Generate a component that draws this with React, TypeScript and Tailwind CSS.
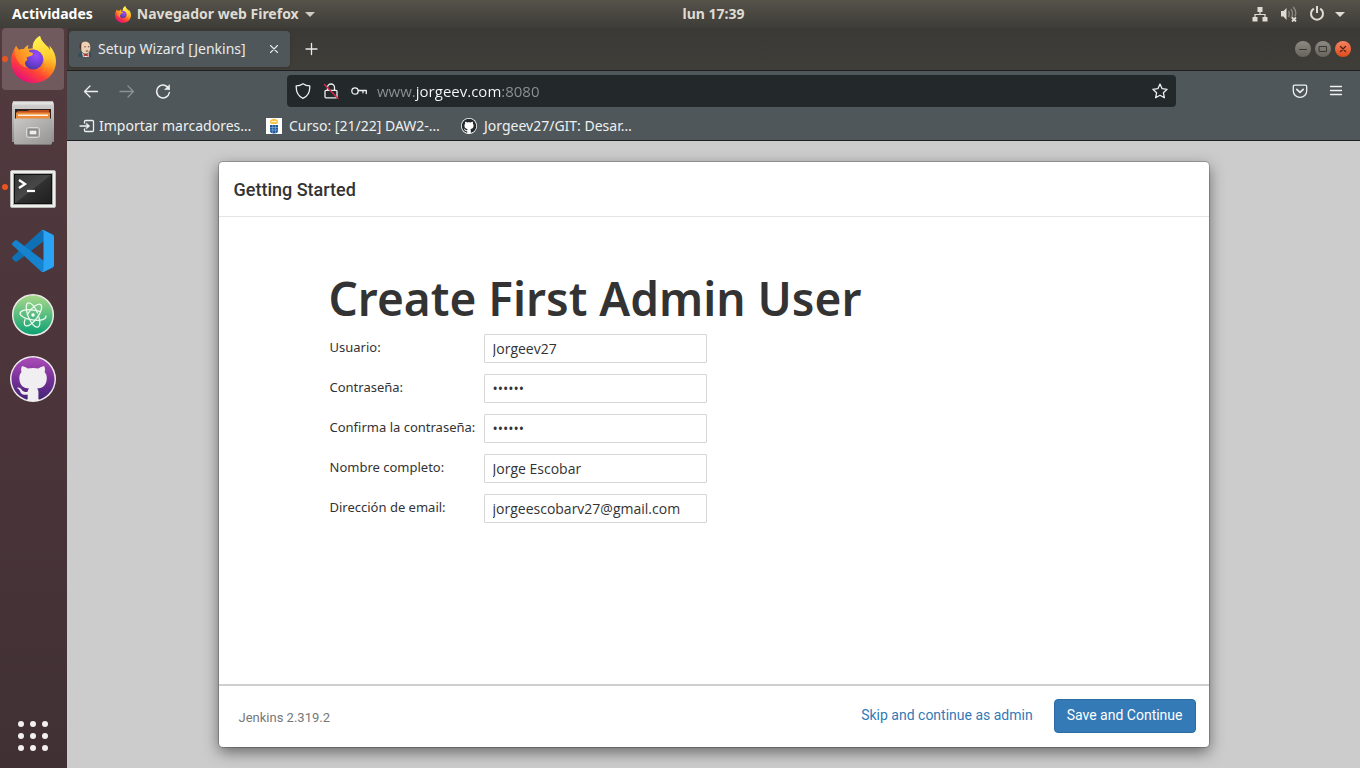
import type { ReactNode } from "react";

const MARK =
  "M8 0C3.58 0 0 3.58 0 8c0 3.54 2.29 6.53 5.47 7.59.4.07.55-.17.55-.38 0-.19-.01-.82-.01-1.49-2.01.37-2.53-.49-2.69-.94-.09-.23-.48-.94-.82-1.13-.28-.15-.68-.52-.01-.53.63-.01 1.08.58 1.23.82.72 1.21 1.87.87 2.33.66.07-.52.28-.87.51-1.07-1.78-.2-3.64-.89-3.64-3.95 0-.87.31-1.59.82-2.15-.08-.2-.36-1.02.08-2.12 0 0 .67-.21 2.2.82.64-.18 1.32-.27 2-.27s1.36.09 2 .27c1.53-1.04 2.2-.82 2.2-.82.44 1.1.16 1.92.08 2.12.51.56.82 1.27.82 2.15 0 3.07-1.87 3.75-3.65 3.95.29.25.54.73.54 1.48 0 1.07-.01 1.93-.01 2.2 0 .21.15.46.55.38A8.01 8.01 0 0 0 16 8c0-4.42-3.58-8-8-8z";

function FirefoxIcon({ id, className }: { id: string; className: string }) {
  return (
    <svg viewBox="0 0 45 47" className={className} aria-hidden="true">
      <defs>
        <linearGradient id={`${id}-body`} x1="0.8" y1="0.05" x2="0.25" y2="0.95">
          <stop offset="0" stopColor="#fff44f" />
          <stop offset="0.3" stopColor="#ffc42d" />
          <stop offset="0.5" stopColor="#ff8a1e" />
          <stop offset="0.72" stopColor="#ff4038" />
          <stop offset="1" stopColor="#e5107c" />
        </linearGradient>
        <radialGradient id={`${id}-globe`} cx="0.65" cy="0.3" r="0.8">
          <stop offset="0" stopColor="#9a4dff" />
          <stop offset="0.5" stopColor="#7340d8" />
          <stop offset="1" stopColor="#45369c" />
        </radialGradient>
        <linearGradient id={`${id}-head`} x1="0.9" y1="0.2" x2="0.1" y2="0.9">
          <stop offset="0" stopColor="#ffb62a" />
          <stop offset="0.5" stopColor="#ff9422" />
          <stop offset="1" stopColor="#ff6a2b" />
        </linearGradient>
        <linearGradient id={`${id}-flame`} x1="0.4" y1="0" x2="0.6" y2="1">
          <stop offset="0" stopColor="#fff44f" />
          <stop offset="0.55" stopColor="#ffd234" />
          <stop offset="1" stopColor="#ff9a22" stopOpacity="0" />
        </linearGradient>
      </defs>
      <path
        d="M29 0C30 5 34 8 37.500 11.500C38.300 12.500 38.800 13.500 39 14.500C39.200 12.500 38.700 11 38 9.300C42.500 13.500 45 19.500 45 25.500C45 37.500 35 47 22.500 47C10 47 0 37.500 0 25C0 20 2 15 5 10L8 14C11 12 18 13.500 22 12C21 8 24 2.500 29 0Z"
        fill={`url(#${id}-body)`}
      />
      <path
        d="M29 0C30 5 34 8 37.500 12C41 18 42 26 38 32C36 35 33 37 31 37C35 30 34 22 30 17C28 14.500 24 14 22 13C21 8 24 2.500 29 0Z"
        fill={`url(#${id}-flame)`}
      />
      <circle cx="22.300" cy="23.500" r="10" fill={`url(#${id}-globe)`} />
      <path
        d="M5 10C6 12 7 13.500 8 14C10 13.200 12 13 13 13C14 11 16 9.500 17.500 9C16.300 12 17 15 19 16.200C22 16.500 22.500 17.500 21.500 19C20.500 20.200 16 20.600 15.500 22C16.500 23 17 24 15 25C13 26.500 14 30 17 32C10 31 4 24 4 17C4 14 4.300 12 5 10Z"
        fill={`url(#${id}-head)`}
      />
    </svg>
  );
}

function FilesIcon() {
  return (
    <svg viewBox="0 0 44 46" className="h-[46px] w-11" aria-hidden="true">
      <defs>
        <linearGradient id="cab" x1="0" y1="0" x2="0" y2="1">
          <stop offset="0" stopColor="#d5d4d3" />
          <stop offset="1" stopColor="#8c8b8a" />
        </linearGradient>
        <linearGradient id="drawer" x1="0" y1="0" x2="1" y2="1">
          <stop offset="0" stopColor="#c9c8c7" />
          <stop offset="1" stopColor="#949392" />
        </linearGradient>
      </defs>
      <path d="M2 1.500h40l1 3.500v37H1V5z" fill="url(#cab)" />
      <path d="M2 1.500h40l.5 3h-41z" fill="#e3e2e1" />
      <path d="M4 9h36v11H4z" fill="#2c2321" />
      <path d="M6 13V12q0-1 1-1h10l1-1h20v6H6z" fill="#c04f1c" />
      <path d="M5 12.500h34V19H5z" fill="#ee8a3a" />
      <path d="M7 14.500h30V16H7z" fill="#fff3e0" />
      <path d="M3 19.500q0-1 1-1h36q1 0 1 1V43q0 1.500-1.500 1.500h-35Q3 44.500 3 43z" fill="url(#drawer)" />
      <path d="M4 44.500h36" stroke="#777" strokeWidth="1" />
      <rect x="15.500" y="27.500" width="13" height="10" rx="2" fill="#a9a8a7" stroke="#d8d8d8" />
      <rect x="18" y="30" width="8" height="5" fill="#ededed" stroke="#6b6b6b" />
    </svg>
  );
}

function TerminalIcon() {
  return (
    <svg viewBox="0 0 46 38" className="mt-1 h-[38px] w-[46px]" aria-hidden="true">
      <defs>
        <linearGradient id="screen" x1="0" y1="0" x2="1" y2="1">
          <stop offset="0" stopColor="#343434" />
          <stop offset="0.48" stopColor="#484848" />
          <stop offset="0.52" stopColor="#303030" />
          <stop offset="1" stopColor="#1e1e1e" />
        </linearGradient>
      </defs>
      <rect x="0.500" y="0.500" width="45" height="37" rx="1.500" fill="#efefee" stroke="#b8b8b6" />
      <rect x="3" y="3" width="40" height="32" fill="#a9aaa7" />
      <rect x="4.500" y="4.500" width="37" height="29" fill="url(#screen)" stroke="#111" />
      <path d="M9 10l6 4-6 4" fill="none" stroke="#fff" strokeWidth="2.300" />
      <path d="M17 21h8" stroke="#fff" strokeWidth="2.200" />
    </svg>
  );
}

function CodeIcon() {
  return (
    <svg viewBox="0 0 100 100" className="size-[42px]" aria-hidden="true">
      <path
        fill="#0f70b3"
        d="M96.461 10.796L75.857.876C73.472-.273 70.622.212 68.750 2.083L1.299 63.583c-1.815 1.654-1.813 4.511.004 6.162l5.510 5.009c1.485 1.350 3.722 1.450 5.321.237L93.361 13.370C96.086 11.303 100 13.246 100 16.667v-.24c0-2.400-1.375-4.589-3.539-5.631z"
      />
      <path
        fill="#1583cd"
        d="M96.461 89.204l-20.604 9.920c-2.385 1.149-5.235.664-7.107-1.207L1.299 36.417c-1.815-1.654-1.813-4.511.004-6.162l5.510-5.009c1.485-1.350 3.722-1.450 5.321-.237L93.361 86.630C96.086 88.697 100 86.754 100 83.333v.24c0 2.400-1.375 4.589-3.539 5.631z"
      />
      <path
        fill="#2aa3f4"
        d="M75.858 99.126c-2.386 1.148-5.236.663-7.108-1.209C71.056 100.223 75 98.590 75 95.328V4.672C75 1.410 71.056-.223 68.750 2.083 70.622.211 73.472-.274 75.858.874l20.601 9.907C98.623 11.822 100 14.011 100 16.413v67.174c0 2.402-1.377 4.592-3.541 5.633l-20.601 9.906z"
      />
    </svg>
  );
}

function AtomIcon() {
  return (
    <svg viewBox="0 0 44 44" className="size-11" aria-hidden="true">
      <defs>
        <linearGradient id="atom" x1="0" y1="0" x2="0" y2="1">
          <stop offset="0" stopColor="#a9d98a" />
          <stop offset="1" stopColor="#09a174" />
        </linearGradient>
      </defs>
      <circle cx="22" cy="22" r="20.300" fill="url(#atom)" stroke="#ece9e6" strokeWidth="1.500" />
      <g fill="none" stroke="#eefaf0" strokeWidth="1.300" strokeLinecap="round">
        <ellipse cx="22" cy="22" rx="13" ry="5" transform="rotate(8 22 22)" strokeDasharray="50 8" />
        <ellipse cx="22" cy="22" rx="13" ry="5" transform="rotate(68 22 22)" strokeDasharray="44 4 30" />
        <ellipse cx="22" cy="22" rx="13" ry="5" transform="rotate(-54 22 22)" strokeDasharray="36 5 40" />
      </g>
      <circle cx="22" cy="22" r="1.700" fill="#fff" />
    </svg>
  );
}

function GithubDesktopIcon() {
  return (
    <svg viewBox="0 0 46 46" className="size-[46px]" aria-hidden="true">
      <defs>
        <linearGradient id="gh" x1="0" y1="0" x2="0" y2="1">
          <stop offset="0" stopColor="#a94cb8" />
          <stop offset="0.5" stopColor="#7a3199" />
          <stop offset="1" stopColor="#432676" />
        </linearGradient>
      </defs>
      <circle cx="23" cy="23" r="23" fill="#f1eef2" />
      <path d={MARK} transform="translate(1.500 1.500) scale(2.690)" fill="url(#gh)" />
    </svg>
  );
}

function GithubMark() {
  return (
    <svg viewBox="0 0 16 16" className="size-4 shrink-0" aria-hidden="true">
      <circle cx="8" cy="8" r="8" fill="#fff" />
      <path d={MARK} transform="translate(0.800 0.800) scale(0.900)" fill="#24292e" />
    </svg>
  );
}

function JenkinsIcon() {
  return (
    <svg viewBox="0 0 16 16" className="size-4 shrink-0" aria-hidden="true">
      <path d="M1 16c0-3 1-4.500 4-5.500h7c2 1 2.500 3 2.500 5.500z" fill="#335061" />
      <path d="M5 11l4 4 3-4v5H6z" fill="#f2f0ea" />
      <path d="M3 5C3 2 5.500.3 8.500.3S13.700 2.500 13.700 6.500c0 4-2 6.500-5.200 6.500S3.500 10 3 5z" fill="#efd2b6" stroke="#3b302b" strokeWidth="0.600" />
      <path d="M3.600 8.500C2 6 2.500 2.500 5 1.200 4 3 4.300 6 4.300 9.500z" fill="#49362f" />
      <path d="M7.300 5.800h1.500M10.900 5.800h1.500M8.700 10h2.600" stroke="#49362f" strokeWidth="0.900" />
      <path d="M6.500 13l2.500 1 2.500-1v2.700L9 14.800l-2.500.9z" fill="#d33833" />
    </svg>
  );
}

function CrestIcon() {
  return (
    <svg viewBox="0 0 16 16" className="size-4 shrink-0" aria-hidden="true">
      <path d="M0 0h16v16H0z" fill="#fff" />
      <path d="M4 2.500Q6 .5 8 .8q2-.3 4 1.700L11.500 6h-7z" fill="#f6c545" />
      <path d="M5.500 3.500h5" stroke="#fff" strokeWidth="0.800" />
      <path d="M4 7h8v6q0 2-4 2.500Q4 15 4 13z" fill="#1a5a9c" />
      <path d="M4 9.500h8M4 12h8M6.700 7v8M9.400 7v8" stroke="#a9c7e2" strokeWidth="0.500" />
    </svg>
  );
}

function Line({ width = 1.3, children }: { width?: number; children: ReactNode }) {
  return (
    <svg
      viewBox="0 0 16 16"
      className="size-4 shrink-0"
      fill="none"
      stroke="currentColor"
      strokeWidth={width}
      strokeLinecap="round"
      strokeLinejoin="round"
      aria-hidden="true"
    >
      {children}
    </svg>
  );
}

function TopBar() {
  return (
    <header className="grid h-7 shrink-0 grid-cols-[1fr_auto_1fr] items-center bg-linear-to-b from-[#55524a] to-[#3e3d38] px-3 text-sm leading-5 font-bold text-[#dfdbd2]">
      <nav className="flex items-center gap-[22px]">
        <button className="text-white">Actividades</button>
        <button className="flex items-center gap-1.5">
          <FirefoxIcon id="ff-small" className="h-[17px] w-4" />
          <span>Navegador web Firefox</span>
          <svg viewBox="0 0 10 5" className="h-[5px] w-2.5" aria-hidden="true">
            <path d="M0 0h10L5 5z" fill="#cfccc5" />
          </svg>
        </button>
      </nav>
      <time className="pl-[67px]">lun 17:39</time>
      <button aria-label="Sistema" className="flex items-center justify-end gap-3 pr-[3px]">
        <svg viewBox="0 0 16 16" className="size-4" aria-hidden="true">
          <path d="M5.500 1h5v5h-5zM.5 11h5v4.500h-5zM10.500 11h5v4.500h-5z" fill="#dfdbd2" />
          <path d="M8 5v3.500M3 11V8.500h10V11" fill="none" stroke="#dfdbd2" strokeWidth="1.200" />
        </svg>
        <svg viewBox="0 0 17 16" className="h-4 w-[17px]" aria-hidden="true">
          <path d="M1 5h2.500L6.500 2v12l-3-3.500H1z" fill="#dfdbd2" />
          <path d="M8.500 5q1.500 3 0 6M11 3.200q3 4.500 0 9M13.300 1q4 5 1.500 9.500" fill="none" stroke="#8b8880" strokeWidth="1.400" />
          <path d="M12 11.500l4 4M16 11.500l-4 4" stroke="#dfdbd2" strokeWidth="1.800" />
        </svg>
        <span className="flex items-center gap-2.5">
          <svg viewBox="0 0 16 16" className="size-4" fill="none" stroke="#dfdbd2" strokeWidth="2" aria-hidden="true">
            <path d="M4.800 2.700a6 6 0 1 0 6.400 0M8 0v7" />
          </svg>
          <svg viewBox="0 0 10 5" className="h-[5px] w-2.5" aria-hidden="true">
            <path d="M0 0h10L5 5z" fill="#dfdbd2" />
          </svg>
        </span>
      </button>
    </header>
  );
}

function DockItem({ label, running, active, children }: { label: string; running?: boolean; active?: boolean; children: ReactNode }) {
  return (
    <button
      aria-label={label}
      className={
        active
          ? "relative flex h-[62px] w-[62px] items-center justify-center rounded bg-[#705a5e]"
          : "relative flex h-[62px] w-[62px] items-center justify-center rounded"
      }
    >
      {running && <span className="absolute top-7 left-0 size-[6px] rounded-full bg-[#e95420]" />}
      {children}
    </button>
  );
}

function Dock() {
  return (
    <aside className="flex w-[67px] shrink-0 flex-col items-center justify-between bg-linear-to-b from-[#523a3e] via-[#4b353a] to-[#403034] pr-px pb-[17px]">
      <div className="flex flex-col gap-[2px]">
        <DockItem label="Firefox" running active>
          <FirefoxIcon id="ff" className="h-[47px] w-[45px]" />
        </DockItem>
        <DockItem label="Archivos">
          <FilesIcon />
        </DockItem>
        <DockItem label="Terminal" running>
          <TerminalIcon />
        </DockItem>
        <DockItem label="Visual Studio Code">
          <CodeIcon />
        </DockItem>
        <DockItem label="Atom">
          <AtomIcon />
        </DockItem>
        <DockItem label="GitHub Desktop">
          <GithubDesktopIcon />
        </DockItem>
      </div>
      <button aria-label="Mostrar aplicaciones" className="grid grid-cols-3 gap-[6px]">
        {Array.from({ length: 9 }, (_, i) => (
          <span key={i} className="size-[6px] rounded-full bg-[#f2f0f0]" />
        ))}
      </button>
    </aside>
  );
}

function TabStrip() {
  return (
    <div className="flex h-[43px] items-center border-b border-[#1f1f1f] bg-linear-to-b from-[#3a3935] to-[#403e39] pr-[9px] pl-0.5 text-[#e8eaea]">
      <div className="flex h-9 w-[221px] items-center gap-[5px] rounded bg-[#50575a] px-2 shadow-sm">
        <JenkinsIcon />
        <span className="flex-1 text-sm whitespace-nowrap">Setup Wizard [Jenkins]</span>
        <button aria-label="Cerrar pestaña">
          <Line width={1.1}>
            <path d="M4.500 4.500l7 7M11.500 4.500l-7 7" />
          </Line>
        </button>
      </div>
      <button aria-label="Nueva pestaña" className="ml-3 p-0.5">
        <Line>
          <path d="M7.500 2.500v11M2 8h11" />
        </Line>
      </button>
      <div className="ml-auto flex gap-1">
        <button aria-label="Minimizar" className="size-4 rounded-full bg-linear-to-b from-[#8c8a82] to-[#66645d] text-[#3a3833]">
          <Line width={1}>
            <path d="M4.500 8.500h7" />
          </Line>
        </button>
        <button aria-label="Maximizar" className="size-4 rounded-full bg-linear-to-b from-[#8c8a82] to-[#66645d] text-[#3a3833]">
          <Line width={1}>
            <path d="M4.500 5.500h7v5h-7z" />
          </Line>
        </button>
        <button aria-label="Cerrar" className="size-4 rounded-full bg-linear-to-b from-[#f58260] to-[#df4a16] text-[#4a2416]">
          <Line width={1.3}>
            <path d="M5.500 5.500l5 5M10.500 5.500l-5 5" />
          </Line>
        </button>
      </div>
    </div>
  );
}

function NavBar() {
  return (
    <div className="flex h-10 items-center bg-[#50575a] pr-4 pl-4 text-[#eef0f0]">
      <div className="flex w-[204px] gap-5">
        <button aria-label="Atrás">
          <Line>
            <path d="M14.500 8.500H1.500M7 3L1.500 8.500 7 14" />
          </Line>
        </button>
        <button aria-label="Adelante" className="text-[#8b9092]">
          <Line>
            <path d="M1 8.500h13.500M9 3l5.500 5.500L9 14" />
          </Line>
        </button>
        <button aria-label="Recargar">
          <Line width={1.5}>
            <path d="M14 6A6.400 6.400 0 1 0 14.400 9.500" />
            <path d="M14.500 2v4.600H9.900z" fill="currentColor" strokeWidth="0.600" />
          </Line>
        </button>
      </div>
      <div className="flex h-8 flex-1 items-center gap-3 rounded bg-[#23282b] px-2">
        <Line>
          <path d="M8 .8c2 1.500 4.300 2.100 6.800 2.100C15 8.500 13.300 13 8 15.300 2.700 13 1 8.500 1.200 2.900 3.700 2.900 6 2.300 8 .8z" />
        </Line>
        <Line>
          <path d="M4.500 7V4.500a3.500 3.500 0 0 1 7 0V7M3 14.800h10q1 0 1-1V8.300q0-1-1-1H3q-1 0-1 1v5.500q0 1 1 1z" />
          <path d="M1.500 1.500l13.500 14" stroke="#e22850" />
        </Line>
        <Line>
          <circle cx="4" cy="8" r="3.200" />
          <path d="M7.300 7.500h8v3M12 7.500v2.300" />
        </Line>
        <input
          aria-label="Dirección"
          defaultValue="www.jorgeev.com:8080"
          spellCheck={false}
          className="-ml-0.5 min-w-0 flex-1 bg-[linear-gradient(to_right,#8d9294_38px,#fbfbfe_38px,#fbfbfe_124px,#8d9294_124px)] bg-clip-text font-['Open_Sans',sans-serif] text-[15px] text-transparent outline-none"
        />
        <button aria-label="Añadir a marcadores">
          <Line>
            <path d="M8 1l2.100 4.700 5 .6-3.700 3.500 1 5L8 12.300l-4.400 2.500 1-5L.9 6.300l5-.6z" />
          </Line>
        </button>
      </div>
      <div className="flex gap-5 pl-[116px]">
        <button aria-label="Guardar en Pocket">
          <Line>
            <path d="M2.500 2.200h11q1.200 0 1.200 1.200V8a6.700 6.300 0 0 1-13.400 0V3.400q0-1.200 1.200-1.200z" />
            <path d="M4.800 6.300L8 9.300l3.200-3" strokeWidth="1.600" />
          </Line>
        </button>
        <button aria-label="Menú">
          <Line>
            <path d="M2.500 3.500h11M2.500 7.500h11M2.500 11.500h11" />
          </Line>
        </button>
      </div>
    </div>
  );
}

function Bookmarks() {
  return (
    <nav className="flex h-[30px] items-center gap-3 border-b border-[#1c1f21] bg-[#50575a] px-3 text-sm whitespace-nowrap text-[#eef0f0]">
      <a href="#importar" className="flex w-[175px] items-center gap-1">
        <Line>
          <path d="M5.500 5V3.500q0-1 1-1h7q1 0 1 1v9q0 1-1 1h-7q-1 0-1-1V11M1 8h6" />
          <path d="M7.500 5.200L10.800 8l-3.300 2.800z" fill="currentColor" strokeWidth="0.600" />
        </Line>
        Importar marcadores…
      </a>
      <a href="#curso" className="flex w-[183px] items-center gap-[7px]">
        <CrestIcon />
        Curso: [21/22] DAW2-…
      </a>
      <a href="#git" className="flex items-center gap-[7px]">
        <GithubMark />
        Jorgeev27/GIT: Desar…
      </a>
    </nav>
  );
}

const FIELDS = [
  { id: "username", label: "Usuario:", type: "text", value: "Jorgeev27" },
  { id: "password1", label: "Contraseña:", type: "password", value: "secret" },
  { id: "password2", label: "Confirma la contraseña:", type: "password", value: "secret" },
  { id: "fullname", label: "Nombre completo:", type: "text", value: "Jorge Escobar" },
  { id: "email", label: "Dirección de email:", type: "text", value: "jorgeescobarv27@gmail.com" },
];

function SetupWizard() {
  return (
    <main className="flex flex-1 justify-center bg-[#cccccc] py-[21px]">
      <section className="flex w-full max-w-[990px] flex-col rounded bg-white text-[#333333] shadow-[0_0_0_1px_rgba(0,0,0,0.2),0_5px_15px_rgba(0,0,0,0.5)]">
        <div className="flex h-[55px] items-center border-b border-[#e5e5e5] px-[15px] pt-0.5">
          <h4 className="font-['Roboto',sans-serif] text-lg font-medium">Getting Started</h4>
        </div>
        <div className="flex-1 px-[110px] pt-[50px]">
          <h1 className="pb-[5px] text-[46px] leading-[62px] font-semibold">Create First Admin User</h1>
          <form className="grid grid-cols-[153px_223px] gap-x-[2px] gap-y-[11px]">
            {FIELDS.map((f) => (
              <div key={f.id} className="contents">
                <label htmlFor={f.id} className="pt-1 pl-px text-[13px] leading-[18px] whitespace-nowrap">
                  {f.label}
                </label>
                <input
                  id={f.id}
                  type={f.type}
                  defaultValue={f.value}
                  className="h-[29px] rounded-[1px] border border-[#d6d6d6] px-2 font-['Open_Sans',sans-serif] text-sm"
                />
              </div>
            ))}
          </form>
        </div>
        <footer className="flex h-[63px] items-center border-t-2 border-[#cfcfcf] pr-[13px] pb-0.5 pl-5 font-['Roboto',sans-serif]">
          <span className="pt-1 text-[13px] text-[#777777]">Jenkins 2.319.2</span>
          <button className="ml-auto h-[34px] px-[21px] pb-0.5 text-sm text-[#337ab7]">Skip and continue as admin</button>
          <button className="h-[34px] rounded border border-[#2e6da4] bg-[#337ab7] px-3 pb-0.5 text-sm text-white">
            Save and Continue
          </button>
        </footer>
      </section>
    </main>
  );
}

export default function App() {
  return (
    <div className="flex min-h-screen flex-col font-['Noto_Sans','Open_Sans',sans-serif]">
      <TopBar />
      <div className="flex flex-1">
        <Dock />
        <div className="flex min-w-0 flex-1 flex-col">
          <TabStrip />
          <NavBar />
          <Bookmarks />
          <SetupWizard />
        </div>
      </div>
    </div>
  );
}
